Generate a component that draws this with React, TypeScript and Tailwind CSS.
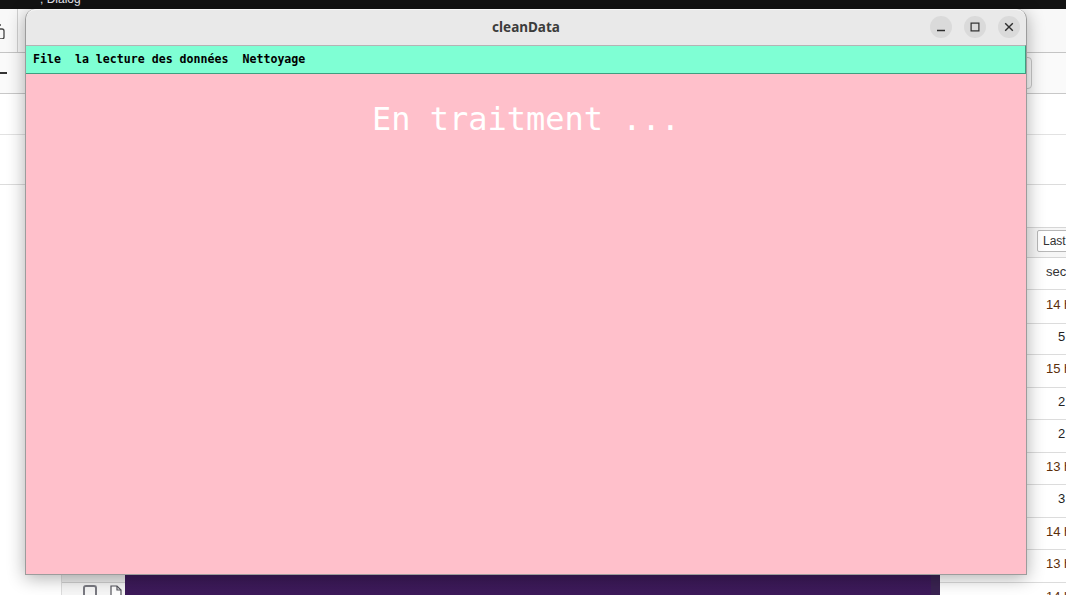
import React from "react";

const rows: { t: string; pl: string; c: string; h: string }[] = [
  { t: "14 hours ago", pl: "pl-[106px]", c: "text-[#5c2e0a]", h: "h-[34px]" },
  { t: "5 days ago", pl: "pl-[118px]", c: "text-[#222222]", h: "h-[31px]" },
  { t: "15 hours ago", pl: "pl-[106px]", c: "text-[#5c2e0a]", h: "h-[33px]" },
  { t: "2 days ago", pl: "pl-[118px]", c: "text-[#222222]", h: "h-[32px]" },
  { t: "2 days ago", pl: "pl-[118px]", c: "text-[#222222]", h: "h-[33px]" },
  { t: "13 hours ago", pl: "pl-[106px]", c: "text-[#5c2e0a]", h: "h-[32px]" },
  { t: "3 days ago", pl: "pl-[118px]", c: "text-[#222222]", h: "h-[33px]" },
  { t: "14 hours ago", pl: "pl-[106px]", c: "text-[#5c2e0a]", h: "h-[32px]" },
  { t: "13 hours ago", pl: "pl-[106px]", c: "text-[#5c2e0a]", h: "h-[33px]" },
  { t: "14 hours ago", pl: "pl-[106px]", c: "text-[#5c2e0a]", h: "h-[33px]" },
];

function Background() {
  return (
    <div className="flex h-full w-full flex-col bg-white font-['Liberation_Sans',Arial,sans-serif]">
      {/* top dark bar */}
      <div className="flex h-[9px] shrink-0 items-start overflow-hidden bg-[#121212]">
        <span className="ml-[40px] -mt-[7px] text-[12px] leading-[12px] text-[#e8e8f0]">; Dialog</span>
      </div>
      {/* toolbar rows */}
      <div className="flex h-[44px] shrink-0 items-center border-b border-[#c4c4c4] bg-[#f8f8f8]">
        <div className="flex h-full w-[18px] items-center border-r border-[#d0d0d0]">
          <svg width="6" height="16" viewBox="0 0 6 16" className="-ml-[1px]">
            <path d="M0 6 h3 a2 2 0 0 1 2 2 v6 a2 2 0 0 1 -2 2 h-3" fill="none" stroke="#444" strokeWidth="1.3" />
            <path d="M0 2 h2" stroke="#444" strokeWidth="1.3" />
          </svg>
        </div>
      </div>
      <div className="flex h-[41px] shrink-0 items-center justify-between border-b border-[#c8c8c8] bg-[#fafafa]">
        <div className="h-[1.5px] w-[7px] bg-[#333]" />
        <div className="mr-[34px] h-[32px] w-[40px] rounded-[4px] border border-[#c8c8c8] bg-[#fafafa]" />
      </div>
      <div className="h-[41px] shrink-0 border-b border-[#e2e2e2] bg-white" />
      <div className="h-[50px] shrink-0 border-b border-[#dcdcdc] bg-white" />
      <div className="h-[42px] shrink-0 bg-white" />
      {/* content */}
      <div className="flex min-h-0 flex-1">
        <div className="w-[62px] shrink-0 border-r border-[#dddddd] bg-white" />
        <div className="flex w-[63px] shrink-0 flex-col justify-end bg-[#f3f3f3]">
          <div className="h-[8px] bg-[#ececec]" />
          <div className="flex h-[13px] items-end gap-[13px] border-t border-[#cfcfcf] bg-[#f7f7f7] pl-[21px]">
            <div className="h-[10px] w-[14px] rounded-t-[3px] border-x-2 border-t-2 border-[#7a7a82]" />
            <svg width="12" height="10" viewBox="0 0 12 10">
              <path d="M1 10 V1 H7 L11 5 V10" fill="#fff" stroke="#55555d" strokeWidth="1.2" />
              <path d="M7 1 V5 H11" fill="none" stroke="#55555d" strokeWidth="1.2" />
            </svg>
          </div>
        </div>
        <div className="w-[806px] shrink-0 bg-gradient-to-b from-[#2c1244] to-[#3d1a5a]" />
        <div className="w-[9px] shrink-0 bg-[#3a2352]" />
        <div className="flex min-w-0 flex-1 flex-col overflow-hidden bg-white text-[13px] text-[#222]">
          <div className="flex h-[31px] shrink-0 items-center border-y border-[#d6d6d6] bg-[#f6f6f6] pb-[3px] pl-[97px]">
            <div className="flex h-[22px] w-[60px] shrink-0 items-center rounded-[2px] border border-[#b8b8b8] bg-white pl-[5px] text-[12px] text-[#333]">
              Last
            </div>
          </div>
          <div className="flex h-[32px] shrink-0 items-center whitespace-nowrap border-b border-[#dcdcdc] pb-[3px] pl-[106px] text-[#333]">
            seconds
          </div>
          {rows.map((r, i) => (
            <div
              key={i}
              className={`flex shrink-0 items-center whitespace-nowrap border-b border-[#dcdcdc] pb-[4px] ${r.h} ${r.pl} ${r.c}`}
            >
              {r.t}
            </div>
          ))}
        </div>
      </div>
    </div>
  );
}

function Window() {
  return (
    <div className="absolute left-[25px] top-[9px] flex h-[566px] w-[1002px] flex-col overflow-hidden rounded-t-[10px] border-x border-b border-[#9c9c9c] bg-[#e9e9e9] shadow-[0_3px_18px_rgba(0,0,0,0.32)]">
      {/* title bar */}
      <div className="relative flex h-[36px] shrink-0 items-center justify-center rounded-t-[10px] border-t border-[#f7f7f7] bg-[#e9e9e9]">
        <span className="font-['Noto_Sans',sans-serif] text-[13.5px] font-bold text-[#3c3c3c]">cleanData</span>
        <div className="absolute right-[6px] top-[6px] flex gap-[12px]">
          <div className="flex h-[22px] w-[22px] items-center justify-center rounded-full bg-[#dadada]">
            <svg width="10" height="10" viewBox="0 0 10 10">
              <path d="M1 8.5 H9" stroke="#2e2e2e" strokeWidth="1.3" />
            </svg>
          </div>
          <div className="flex h-[22px] w-[22px] items-center justify-center rounded-full bg-[#dadada]">
            <svg width="10" height="10" viewBox="0 0 10 10">
              <rect x="1.1" y="1.1" width="7.8" height="7.8" fill="none" stroke="#2e2e2e" strokeWidth="1.2" />
            </svg>
          </div>
          <div className="flex h-[22px] w-[22px] items-center justify-center rounded-full bg-[#dadada]">
            <svg width="10" height="10" viewBox="0 0 10 10">
              <path d="M1.2 1.2 L8.8 8.8 M8.8 1.2 L1.2 8.8" stroke="#2e2e2e" strokeWidth="1.4" />
            </svg>
          </div>
        </div>
      </div>
      {/* menu bar */}
      <div className="flex h-[29px] shrink-0 items-center border-t border-b border-r border-t-[#b4b4b4] border-b-[#3f9e80] border-r-[#3f9e80] bg-[#7fffd4] font-['DejaVu_Sans_Mono',monospace] text-[11.6px] font-bold text-black">
        <span className="px-[7px]">File</span>
        <span className="px-[7px]">la lecture des données</span>
        <span className="px-[7px]">Nettoyage</span>
      </div>
      {/* content */}
      <div className="flex flex-1 justify-center bg-[#ffc0cb] pt-[27px]">
        <span className="h-[37px] whitespace-pre font-['DejaVu_Sans_Mono',monospace] text-[32px] font-medium leading-[37px] text-white">
          En traitment ...
        </span>
      </div>
    </div>
  );
}

export default function App() {
  return (
    <div className="relative h-[595px] w-[1066px] overflow-hidden">
      <Background />
      <Window />
    </div>
  );
}
